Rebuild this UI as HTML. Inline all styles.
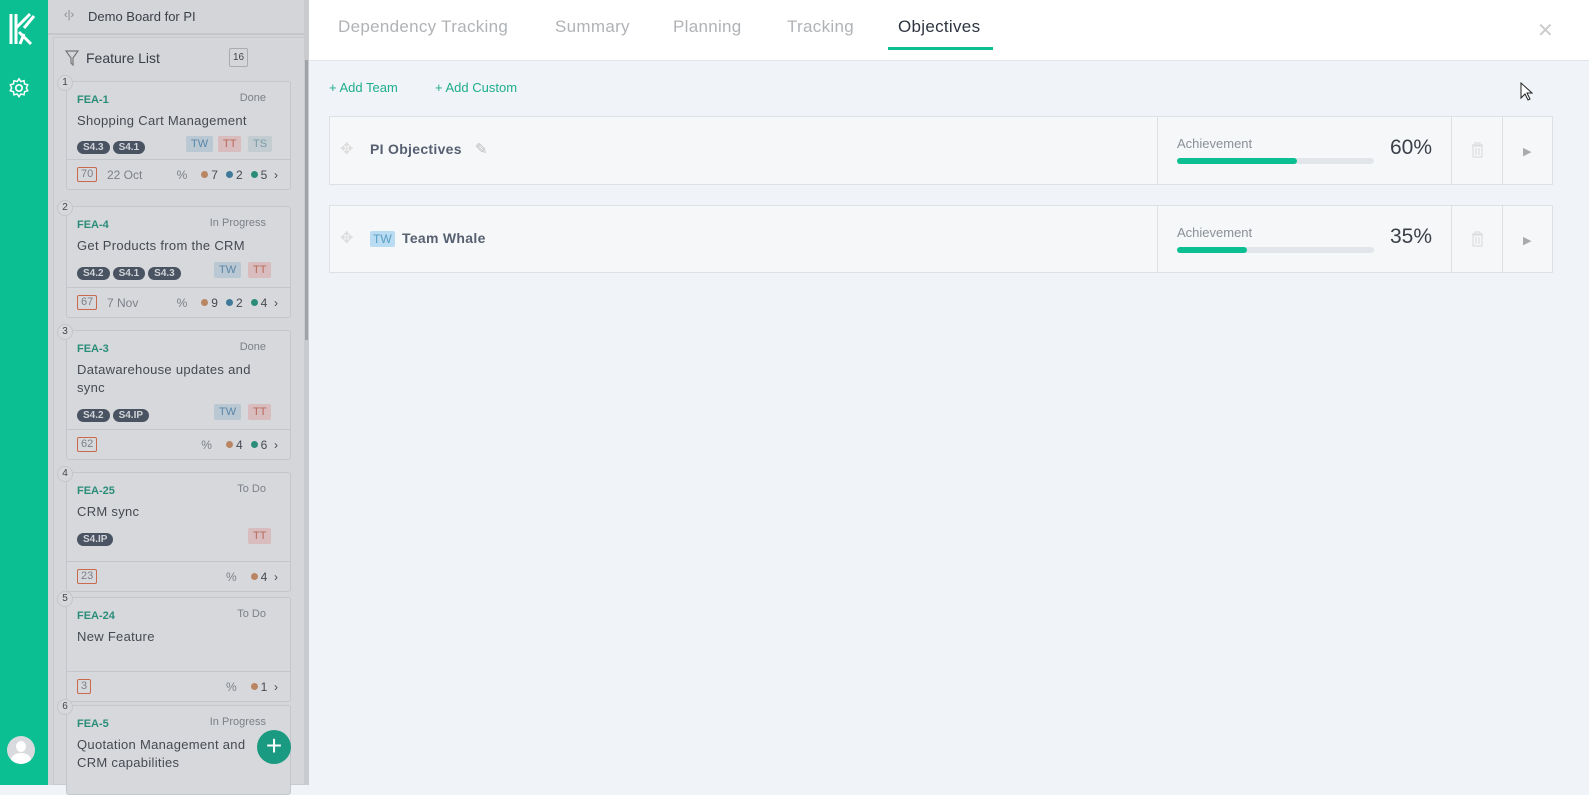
<!DOCTYPE html>
<html><head><meta charset="utf-8"><style>
*{box-sizing:border-box;margin:0;padding:0}
body{width:1589px;height:785px;overflow:hidden;font-family:"Liberation Sans",sans-serif;position:relative;background:#f0f3f7}
.sb{position:absolute;left:0;top:0;width:48px;height:785px;background:#0bbf93}
.lp{position:absolute;left:48px;top:0;width:261px;height:785px;background:#d3d4d7}
.hdr{position:absolute;left:0;top:0;width:261px;height:35px;border-bottom:2px solid #c4c6ca;background:#d4d5d8}
.hdr span{position:absolute;left:40px;top:9px;font-size:13px;color:#3a3f48}
.fl{position:absolute;left:5px;top:37px;width:256px;height:748px;background:#d5d6d9;border:1px solid #c8cacd}
.card{position:absolute;left:66px;width:225px;background:#d7d8db;border:1px solid #c3c6ca;border-radius:3px}
.num{position:absolute;left:-10px;top:-7px;width:16px;height:16px;border-radius:50%;border:1px solid #c3c6ca;background:#d7d8db;font-size:10px;text-align:center;line-height:14px;color:#444}
.id{position:absolute;left:10px;top:12px;font-size:11px;color:#2a8d7a;font-weight:bold}
.st{position:absolute;right:24px;top:10px;font-size:11px;color:#7b8088}
.tt{position:absolute;left:10px;font-size:13px;color:#454a52;line-height:18px;width:195px;letter-spacing:0.3px}
.pill{display:inline-block;background:#4a5362;color:#d0d3d8;font-size:10px;font-weight:bold;padding:1px 6px;border-radius:7px;margin-right:3px}
.tg{position:absolute;font-size:11px;padding:2px 5px;border-radius:2px}
.tw{background:#b9c8d3;color:#5b86a8}.ttt{background:#d9bcbd;color:#b86a5c}.ts{background:#c3cdd1;color:#7a9aa8}
.ft{position:absolute;left:0;right:0;bottom:0;height:30px;border-top:1px solid #c3c6ca;font-size:12px;color:#7b8088}
.ft .r{position:absolute;right:12px;top:8px;color:#454a52}
.d{display:inline-block;width:7px;height:7px;border-radius:50%;margin:0 3px 1px 8px}
.o{background:#b98563}.b{background:#3f7a9a}.g{background:#2a8d7a}
.sp{position:absolute;left:10px;top:7px;border:1px solid #c86a4c;border-radius:2px;padding:0 3px;font-size:11px;color:#7b8088;line-height:13px}
.main{position:absolute;left:309px;top:0;width:1280px;height:785px;background:#f0f3f7}
.tabs{position:absolute;left:0;top:0;width:1280px;height:61px;background:#fff;border-bottom:1px solid #e2e6ea}
.tab{position:absolute;top:17px;font-size:17px;color:#b0b3b6;letter-spacing:0.3px}
.row{position:absolute;left:20px;width:1224px;height:69px;background:#f6f7f9;border:1px solid #dde1e6}
.row .v{position:absolute;top:0;bottom:0;width:1px;background:#dde1e6}
.ach{position:absolute;left:848px;top:19px;font-size:13px;color:#8a9097}
.bar{position:absolute;left:848px;top:41px;width:197px;height:6px;border-radius:3px;background:#e2e6eb}
.bar i{display:block;height:6px;border-radius:3px;background:#0bbf93}
.pct{position:absolute;left:1060px;top:19px;font-size:21px;color:#3a3f48}
.rt{position:absolute;top:24px;font-size:14px;font-weight:bold;color:#566070;letter-spacing:0.3px}
</style></head><body>
<div class="sb">
<svg style="position:absolute;left:4px;top:10px" width="34" height="38" viewBox="0 0 34 38"><path d="M7 4v30M12 4v30M12 18L26 4M15 22L27 34M20 24l-4 10M30 6L20 18" stroke="#fff" stroke-width="3" fill="none"/></svg>
<svg style="position:absolute;left:8px;top:77px" width="22" height="22" viewBox="0 0 24 24"><circle cx="12" cy="12" r="3.5" fill="none" stroke="#fff" stroke-width="1.8"/><path d="M12 2l2 3 3.5-1 .5 3.5 3.5 1-1.5 3.5 1.5 3-3.5 1-.5 3.5-3.5-1-2 3-2-3-3.5 1-.5-3.5-3.5-1 1.5-3-1.5-3.5 3.5-1 .5-3.5 3.5 1z" fill="none" stroke="#fff" stroke-width="1.6"/></svg>
<div style="position:absolute;left:7px;top:736px;width:28px;height:28px;border-radius:50%;background:#d8dadd;overflow:hidden"><div style="position:absolute;left:9px;top:5px;width:10px;height:11px;border-radius:50%;background:#fff"></div><div style="position:absolute;left:4px;top:17px;width:20px;height:14px;border-radius:50% 50% 0 0;background:#fff"></div></div>
</div>
<div class="lp">
<div class="hdr"><span style="left:16px;color:#888;font-size:11px">‹|›</span><span>Demo Board for PI</span></div>
<div class="fl">
<svg style="position:absolute;left:11px;top:12px" width="14" height="16" viewBox="0 0 14 16"><path d="M1 1h12L8 8v7L6 13V8z" fill="none" stroke="#777" stroke-width="1.2"/></svg>
<div style="position:absolute;left:32px;top:12px;font-size:14px;color:#3a3f48">Feature List</div>
<div style="position:absolute;left:175px;top:10px;width:19px;height:19px;border:1px solid #a8abaf;border-radius:2px;font-size:10px;text-align:center;line-height:17px;color:#444">16</div>
</div>
</div>
<div class="card" style="top:81px;height:109px"><div class="num">1</div><div class="id">FEA-1</div><div class="st">Done</div><div class="tt" style="top:30px">Shopping Cart Management</div>
<div style="position:absolute;left:10px;top:55px"><span class="pill">S4.3</span><span class="pill">S4.1</span></div>
<span class="tg tw" style="left:119px;top:54px">TW</span><span class="tg ttt" style="left:151px;top:54px">TT</span><span class="tg ts" style="left:181px;top:54px">TS</span>
<div class="ft"><span class="sp">70</span><span style="position:absolute;left:40px;top:8px">22 Oct</span><span class="r"><span style="color:#7b8088;margin-right:6px">%</span><i class="d o"></i>7<i class="d b"></i>2<i class="d g"></i>5 &nbsp;›</span></div></div>
<div class="card" style="top:206px;height:112px"><div class="num">2</div><div class="id">FEA-4</div><div class="st">In Progress</div><div class="tt" style="top:30px">Get Products from the CRM</div>
<div style="position:absolute;left:10px;top:56px"><span class="pill">S4.2</span><span class="pill">S4.1</span><span class="pill">S4.3</span></div>
<span class="tg tw" style="left:147px;top:55px">TW</span><span class="tg ttt" style="left:181px;top:55px">TT</span>
<div class="ft"><span class="sp">67</span><span style="position:absolute;left:40px;top:8px">7 Nov</span><span class="r"><span style="color:#7b8088;margin-right:6px">%</span><i class="d o"></i>9<i class="d b"></i>2<i class="d g"></i>4 &nbsp;›</span></div></div>
<div class="card" style="top:330px;height:130px"><div class="num">3</div><div class="id">FEA-3</div><div class="st">Done</div><div class="tt" style="top:30px;width:185px">Datawarehouse updates and sync</div>
<div style="position:absolute;left:10px;top:74px"><span class="pill">S4.2</span><span class="pill">S4.IP</span></div>
<span class="tg tw" style="left:147px;top:73px">TW</span><span class="tg ttt" style="left:181px;top:73px">TT</span>
<div class="ft"><span class="sp">62</span><span class="r"><span style="color:#7b8088;margin-right:6px">%</span><i class="d o"></i>4<i class="d g"></i>6 &nbsp;›</span></div></div>
<div class="card" style="top:472px;height:120px"><div class="num">4</div><div class="id">FEA-25</div><div class="st">To Do</div><div class="tt" style="top:30px">CRM sync</div>
<div style="position:absolute;left:10px;top:56px"><span class="pill">S4.IP</span></div>
<span class="tg ttt" style="left:181px;top:55px">TT</span>
<div class="ft"><span class="sp">23</span><span class="r"><span style="color:#7b8088;margin-right:6px">%</span><i class="d o"></i>4 &nbsp;›</span></div></div>
<div class="card" style="top:597px;height:105px"><div class="num">5</div><div class="id">FEA-24</div><div class="st">To Do</div><div class="tt" style="top:30px">New Feature</div>
<div class="ft"><span class="sp">3</span><span class="r"><span style="color:#7b8088;margin-right:6px">%</span><i class="d o"></i>1 &nbsp;›</span></div></div>
<div class="card" style="top:705px;height:90px"><div class="num">6</div><div class="id">FEA-5</div><div class="st">In Progress</div><div class="tt" style="top:30px;width:200px">Quotation Management and CRM capabilities</div></div>
<div style="position:absolute;left:257px;top:730px;width:34px;height:34px;border-radius:50%;background:#1a9a80;color:#fff;font-size:28px;text-align:center;line-height:32px">+</div>
<div style="position:absolute;left:304px;top:0;width:5px;height:785px;background:#c9cbce"></div>
<div style="position:absolute;left:305px;top:60px;width:3px;height:280px;background:#9fa2a6"></div>

<div class="main">
<div class="tabs">
<span class="tab" style="left:29px">Dependency Tracking</span>
<span class="tab" style="left:246px">Summary</span>
<span class="tab" style="left:364px">Planning</span>
<span class="tab" style="left:478px">Tracking</span>
<span class="tab" style="left:589px;color:#2e3440">Objectives</span>
<div style="position:absolute;left:579px;top:47px;width:105px;height:3px;background:#0bbf93"></div>
<span style="position:absolute;left:1228px;top:18px;font-size:20px;color:#ccc">✕</span>
</div>
<span style="position:absolute;left:20px;top:80px;font-size:13px;color:#1fae8d">+ Add Team</span>
<span style="position:absolute;left:126px;top:80px;font-size:13px;color:#1fae8d">+ Add Custom</span>
<div class="row" style="top:116px">
<span style="position:absolute;left:10px;top:22px;color:#ddd;font-size:16px">✥</span>
<span class="rt" style="left:40px">PI Objectives</span><span style="position:absolute;left:145px;top:23px;color:#bbb;font-size:15px">✎</span>
<div class="v" style="left:827px"></div><div class="v" style="left:1121px"></div><div class="v" style="left:1172px"></div>
<div class="ach" style="left:847px">Achievement</div><div class="bar" style="left:847px"><i style="width:120px"></i></div><div class="pct">60%</div>
<svg style="position:absolute;left:1141px;top:25px" width="13" height="16" viewBox="0 0 13 16"><path d="M1 3h11M4 3V1h5v2M2 4h9v11H2zM5 6v7M8 6v7" fill="none" stroke="#ddd" stroke-width="1.2"/></svg>
<span style="position:absolute;left:1193px;top:28px;color:#aaa;font-size:11px">▶</span>
</div>
<div class="row" style="top:205px;height:68px">
<span style="position:absolute;left:10px;top:22px;color:#ddd;font-size:16px">✥</span>
<span style="position:absolute;left:40px;top:25px;background:#b9dcf2;color:#5a9ec4;font-size:12px;padding:1px 3px;border-radius:2px">TW</span>
<span class="rt" style="left:72px">Team Whale</span>
<div class="v" style="left:827px"></div><div class="v" style="left:1121px"></div><div class="v" style="left:1172px"></div>
<div class="ach" style="left:847px">Achievement</div><div class="bar" style="left:847px"><i style="width:70px"></i></div><div class="pct">35%</div>
<svg style="position:absolute;left:1141px;top:25px" width="13" height="16" viewBox="0 0 13 16"><path d="M1 3h11M4 3V1h5v2M2 4h9v11H2zM5 6v7M8 6v7" fill="none" stroke="#ddd" stroke-width="1.2"/></svg>
<span style="position:absolute;left:1193px;top:28px;color:#aaa;font-size:11px">▶</span>
</div>
<svg style="position:absolute;left:1211px;top:82px" width="14" height="20" viewBox="0 0 14 20"><path d="M1 1v15l4-4 3 6 2-1-3-6h5z" fill="#fff" stroke="#222" stroke-width="1"/></svg>
</div>
</body></html>
